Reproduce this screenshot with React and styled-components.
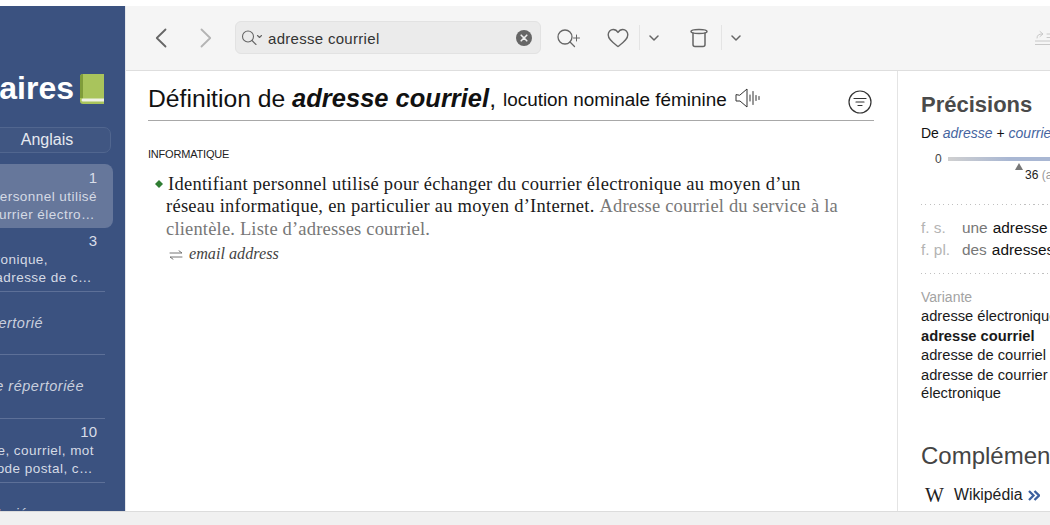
import React from 'react';
import styled, { createGlobalStyle } from 'styled-components';

const GlobalStyle = createGlobalStyle`
  html, body {
    margin: 0;
    padding: 0;
    width: 1050px;
    height: 525px;
    overflow: hidden;
    background: #fff;
    font-family: "Liberation Sans", Arial, sans-serif;
  }
`;

const Page = styled.div`
  display: flex;
  flex-direction: column;
  width: 1050px;
  height: 525px;
  box-sizing: border-box;
  background: #f0f0f0;
`;

const TopStrip = styled.div`
  flex: 0 0 6px;
  background: #fff;
`;

const Window = styled.div`
  display: flex;
  flex: 0 0 506px;
  background: #fff;
  border-bottom: 1px solid #dcdcdc;
  box-sizing: border-box;
  overflow: hidden;
`;

const Sidebar = styled.aside`
  display: flex;
  flex-direction: column;
  align-items: flex-end;
  flex: 0 0 125px;
  width: 125px;
  background: #3b5280;
  color: #fff;
  overflow: hidden;
  border-right: 1px solid #e4e6ea;
  box-sizing: content-box;
`;

const Brand = styled.div`
  display: flex;
  align-items: center;
  justify-content: flex-end;
  gap: 6px;
  flex: 0 0 30px;
  margin-top: 64px;
  padding-right: 21px;
  white-space: nowrap;
`;

const BrandTitle = styled.span`
  font-size: 32px;
  font-weight: 700;
  color: #fff;
`;

const Segment = styled.div`
  display: flex;
  align-items: center;
  justify-content: center;
  flex: 0 0 26px;
  width: 128px;
  margin-top: 20px;
  margin-right: 14px;
  border: 1px solid #51668f;
  border-radius: 0 7px 7px 0;
  box-sizing: border-box;
  background: #405682;
  font-size: 16px;
  color: #e6e9f0;
`;

const ResultList = styled.div`
  display: flex;
  flex-direction: column;
  width: 300px;
  margin-top: 11px;
`;

const Result = styled.div`
  display: flex;
  flex-direction: column;
  align-items: flex-end;
  flex: 0 0 ${(p) => p.$height}px;
  height: ${(p) => p.$height}px;
  box-sizing: border-box;
  margin-right: ${(p) => (p.$selected ? 12 : 20)}px;
  padding-top: ${(p) => (p.$selected ? 5 : 4)}px;
  padding-right: ${(p) => (p.$selected ? 16 : 8)}px;
  background: ${(p) => (p.$selected ? '#66779b' : 'transparent')};
  border-radius: ${(p) => (p.$selected ? '0 8px 8px 0' : '0')};
  border-bottom: ${(p) => (p.$selected || p.$plain ? '0' : '1px solid #5d7098')};
`;

const ResultCount = styled.span`
  height: 19px;
  font-size: 15px;
  line-height: 18px;
  color: #d8dde8;
`;

const ResultLine = styled.span`
  height: 18px;
  margin-right: ${(p) => p.$inset || 0}px;
  font-size: 13.5px;
  line-height: 18px;
  letter-spacing: 0.45px;
  white-space: nowrap;
  color: #d5dae5;
`;

const EmptyLine = styled(ResultLine)`
  margin-top: 18px;
  font-size: 14.5px;
  letter-spacing: 0.5px;
  font-style: italic;
  color: #c9cfdd;
`;

const Content = styled.div`
  display: flex;
  flex-direction: column;
  flex: 1;
  min-width: 0;
`;

const Toolbar = styled.div`
  display: flex;
  align-items: center;
  flex: 0 0 65px;
  height: 65px;
  padding-left: 29px;
  padding-bottom: 1px;
  box-sizing: border-box;
  background: #f5f5f5;
  border-bottom: 1px solid #dedede;
`;

const ToolIcon = styled.svg`
  display: block;
  flex: none;
  margin-left: ${(p) => p.$ml || 0}px;
  fill: none;
  stroke: ${(p) => p.$color || '#666'};
  stroke-width: ${(p) => p.$sw || 1.5};
  stroke-linecap: round;
  stroke-linejoin: round;
`;

const SearchField = styled.div`
  display: flex;
  flex: none;
  align-items: center;
  width: 306px;
  height: 33px;
  margin-left: 23px;
  padding: 0 8px 0 5px;
  box-sizing: border-box;
  background: #ebebeb;
  border: 1px solid #e2e2e2;
  border-radius: 6px;
`;

const SearchText = styled.span`
  flex: 1;
  margin-left: 5px;
  padding-top: 1px;
  font-size: 15px;
  letter-spacing: 0.3px;
  color: #333;
`;

const Separator = styled.span`
  flex: none;
  width: 1px;
  height: 25px;
  margin-left: ${(p) => p.$ml}px;
  background: #e4e4e4;
`;

const Panes = styled.div`
  display: flex;
  flex: 1;
  min-height: 0;
`;

const Main = styled.main`
  flex: 0 0 772px;
  width: 772px;
  padding: 0 23px 0 22px;
  box-sizing: border-box;
  border-right: 1px solid #e4e4e4;
`;

const Heading = styled.div`
  display: flex;
  align-items: center;
  height: 50px;
  padding-top: 5px;
  box-sizing: border-box;
  border-bottom: 1px solid #a8a8a8;
  white-space: nowrap;
  color: #111;
`;

const HeadingTitle = styled.h1`
  margin: 0;
  font-size: 24.7px;
  font-weight: 400;
  b {
    font-size: 25.5px;
    font-weight: 700;
    font-style: italic;
  }
`;

const HeadingKind = styled.span`
  margin-left: 7px;
  margin-top: 3px;
  font-size: 18.9px;
`;

const FilterButton = styled.svg`
  margin-left: auto;
  margin-top: 7px;
  margin-right: 2px;
  fill: none;
  stroke: #333;
  stroke-width: 1.2;
  stroke-linecap: round;
`;

const Domain = styled.div`
  margin-top: 27px;
  font-size: 11px;
  line-height: 13px;
  letter-spacing: -0.2px;
  color: #222;
`;

const Definition = styled.p`
  width: 676px;
  margin: 12px 0 0;
  padding-left: 18px;
  font-family: "Liberation Serif", "Times New Roman", serif;
  font-size: 18.5px;
  line-height: 22.4px;
  letter-spacing: 0.26px;
  text-indent: 2px;
  color: #1a1a1a;
`;

const Bullet = styled.svg`
  margin: 0 5px 2px -13px;
  fill: #2f7d32;
`;

const Example = styled.span`
  letter-spacing: 0.18px;
  color: #777;
`;

const Translation = styled.div`
  display: flex;
  align-items: center;
  gap: 6px;
  margin: 5px 0 0 21px;
  font-family: "Liberation Serif", "Times New Roman", serif;
  font-size: 16.2px;
  font-style: italic;
  color: #444;
`;

const Side = styled.aside`
  flex: 1;
  min-width: 0;
  overflow: hidden;
  padding: 21px 0 0 23px;
  box-sizing: border-box;
  white-space: nowrap;
`;

const SideTitle = styled.h2`
  margin: 0;
  font-size: 22px;
  line-height: 26px;
  font-weight: 700;
  color: #4a4a4a;
`;

const Origin = styled.div`
  margin-top: 6px;
  font-size: 14px;
  line-height: 18px;
  color: #111;
  i {
    color: #46659f;
  }
`;

const Timeline = styled.div`
  display: flex;
  align-items: center;
  margin: 10px 0 0 14px;
  font-size: 12px;
  line-height: 14px;
  color: #444;
`;

const Track = styled.div`
  width: 200px;
  height: 4px;
  margin-left: 6px;
  background: linear-gradient(90deg, #d0d0d0, #a9b7d3 60%);
`;

const Marker = styled.div`
  display: flex;
  margin: -4px 0 0 94px;
  font-size: 12px;
  line-height: 14px;
  color: #222;
  span {
    margin-top: 6px;
    margin-left: 2px;
  }
  span em {
    font-style: normal;
    color: #999;
  }
`;

const Triangle = styled.i`
  width: 0;
  height: 0;
  margin-top: 1px;
  border-left: 4px solid transparent;
  border-right: 4px solid transparent;
  border-bottom: 7px solid #777;
`;

const DottedRule = styled.div`
  height: 1px;
  margin-top: ${(p) => p.$top}px;
  background: repeating-linear-gradient(90deg, #c0c0c0 0 1px, transparent 1px 4.5px);
`;

const FormList = styled.div`
  margin-top: 12px;
`;

const FormRow = styled.div`
  display: flex;
  height: 22px;
  align-items: center;
  font-size: 15.4px;
  color: #111;
`;

const FormLabel = styled.span`
  flex: 0 0 41px;
  color: #b4b4b4;
`;

const FormArticle = styled.span`
  margin-right: 5px;
  color: #777;
`;

const VariantLabel = styled.div`
  margin-top: 14px;
  font-size: 14px;
  line-height: 18px;
  color: #a3a3a3;
`;

const VariantList = styled.div`
  margin-top: 1px;
  font-size: 14.7px;
  line-height: 19.6px;
  color: #1a1a1a;
`;

const VariantWrap = styled.div`
  width: 135px;
  line-height: 18px;
  white-space: normal;
`;

const SideTitleLight = styled.h2`
  margin: 40px 0 0;
  font-size: 24px;
  line-height: 28px;
  font-weight: 400;
  color: #444;
`;

const LinkRow = styled.div`
  display: flex;
  align-items: center;
  margin-top: 16px;
  font-size: 15.8px;
  line-height: 18px;
  color: #222;
`;

const WikiMark = styled.span`
  flex: 0 0 33px;
  padding-left: 4px;
  box-sizing: border-box;
  font-family: "Liberation Serif", "Times New Roman", serif;
  font-size: 20px;
  color: #222;
`;

const More = styled.svg`
  margin-left: 6px;
  margin-top: 2px;
  fill: none;
  stroke: #3c5f9e;
  stroke-width: 2.3;
`;

const Book = () => (
  <svg width="24" height="30" viewBox="0 0 24 30">
    <path d="M3 0h21v30H3a3 3 0 0 1-3-3V3a3 3 0 0 1 3-3z" fill="#a9c45c" />
    <path d="M3 0v24H0V3a3 3 0 0 1 3-3z" fill="#7f9c3a" />
    <path d="M3 24.5h21v3H3a1.5 1.5 0 0 1 0-3z" fill="#f0f2e6" />
  </svg>
);

const results = [
  { count: '1', lines: [['Identifiant personnel utilisé', 0], ['pour échanger du courrier électro…', 2]], selected: true, height: 64 },
  { count: '3', lines: [['Adresse électronique,', 49], ['courriel, adresse de c…', 5]], height: 64 },
  { empty: 'Non répertorié', inset: 54, height: 63 },
  { empty: 'Forme répertoriée', inset: 13, height: 64 },
  { count: '10', lines: [['Adresse, courriel, mot', 3], ['de passe, code postal, c…', 4]], height: 64 },
  { empty: 'Non répertoriée', inset: 61, height: 40, plain: true },
];

export default function App() {
  return (
    <Page>
      <GlobalStyle />
      <TopStrip />
      <Window>
        <Sidebar>
          <Brand>
            <BrandTitle>Dictionnaires</BrandTitle>
            <Book />
          </Brand>
          <Segment>Anglais</Segment>
          <ResultList>
            {results.map((r, i) => (
              <Result key={i} $height={r.height} $selected={r.selected} $plain={r.plain}>
                {r.count && <ResultCount>{r.count}</ResultCount>}
                {r.lines && r.lines.map(([t, inset]) => (
                  <ResultLine key={t} $inset={inset}>{t}</ResultLine>
                ))}
                {r.empty && <EmptyLine $inset={r.inset}>{r.empty}</EmptyLine>}
              </Result>
            ))}
          </ResultList>
        </Sidebar>

        <Content>
          <Toolbar>
            <ToolIcon width="12" height="20" viewBox="0 0 12 20" $sw={1.8}><path d="M10.500 1.500 1.800 10l8.700 8.500" /></ToolIcon>
            <ToolIcon width="12" height="20" viewBox="0 0 12 20" $ml={33} $sw={1.8} $color="#b4b4b4"><path d="M1.500 1.500 10.200 10l-8.700 8.500" /></ToolIcon>
            <SearchField>
              <ToolIcon width="22" height="18" viewBox="0 0 22 18" $sw={1.1}>
                <circle cx="7" cy="7.500" r="5.500" />
                <path d="m11 11.500 4 4" />
                <path d="m16.500 6.500 2 2 2-2" />
              </ToolIcon>
              <SearchText>adresse courriel</SearchText>
              <svg width="16" height="16" viewBox="0 0 16 16">
                <circle cx="8" cy="8" r="8" fill="#666" />
                <path d="m5.200 5.200 5.600 5.600m0-5.600-5.600 5.600" stroke="#ededed" strokeWidth="1.600" strokeLinecap="round" />
              </svg>
            </SearchField>
            <ToolIcon width="24" height="20" viewBox="0 0 24 20" $ml={16} $sw={1.3}>
              <circle cx="8" cy="9" r="7" />
              <path d="m13 14 4.500 4.500" />
              <path d="M19.500 7v6M16.500 10h6" strokeWidth="1" />
            </ToolIcon>
            <ToolIcon width="22" height="20" viewBox="0 0 22 20" $ml={26} $sw={1.4}>
              <path d="M11 18.500C6 14.500 1.200 11.500 1.200 6.700 1.200 3.700 3.500 1.500 6.200 1.500c2 0 3.700 1 4.800 3 1.100-2 2.800-3 4.800-3 2.700 0 5 2.200 5 5.200 0 4.800-4.800 7.800-9.800 11.800z" />
            </ToolIcon>
            <Separator $ml={10} />
            <ToolIcon width="10" height="6" viewBox="0 0 10 6" $ml={9} $sw={1.5}><path d="m1 1 4 4 4-4" /></ToolIcon>
            <ToolIcon width="18" height="20" viewBox="0 0 18 20" $ml={31} $sw={1.5}>
              <path d="M1 3.500c0-1.200 3-2 8-2s8 .8 8 2-3 2-8 2-8-.8-8-2z" />
              <path d="M3 5v11.500a2 2 0 0 0 2 2h8a2 2 0 0 0 2-2V5" />
            </ToolIcon>
            <Separator $ml={13} />
            <ToolIcon width="10" height="6" viewBox="0 0 10 6" $ml={9} $sw={1.5}><path d="m1 1 4 4 4-4" /></ToolIcon>
            <ToolIcon width="20" height="16" viewBox="0 0 20 16" $ml={294} $sw={1} $color="#c8c8c8">
              <path d="M2 8c0-3 2-4 5-4M5 1.500 8 4 5 6.500" />
              <path d="M0 11h20M0 14.500h20M12 4h8M12 7.500h8" />
            </ToolIcon>
          </Toolbar>

          <Panes>
            <Main>
              <Heading>
                <HeadingTitle>Définition de <b>adresse courriel</b>,</HeadingTitle>
                <HeadingKind>locution nominale féminine</HeadingKind>
                <ToolIcon width="26" height="20" viewBox="0 0 26 20" $ml={8} $color="#333" $sw={1}>
                  <path d="M1 7v6h4l7 6V1L5 7z" />
                  <path d="M15 7v6M18 3.500v13M21 7.500v5M24 8.500v3" />
                </ToolIcon>
                <FilterButton width="24" height="24" viewBox="0 0 24 24">
                  <circle cx="12" cy="12" r="11" />
                  <path d="M6 8.500h12M8 12h8M10 15.500h4" />
                </FilterButton>
              </Heading>
              <Domain>INFORMATIQUE</Domain>
              <Definition>
                <Bullet width="8" height="8" viewBox="0 0 8 8"><path d="M4 0l4 4-4 4-4-4z" /></Bullet>
                Identifiant personnel utilisé pour échanger du courrier électronique au moyen d’un réseau informatique, en particulier au moyen d’Internet. <Example>Adresse courriel du service à la clientèle. Liste d’adresses courriel.</Example>
              </Definition>
              <Translation>
                <ToolIcon width="14" height="10" viewBox="0 0 14 10" $sw={0.9} $color="#666">
                  <path d="M1 3h12L10 .8M13 7H1l3 2.200" />
                </ToolIcon>
                <span>email address</span>
              </Translation>
            </Main>

            <Side>
              <SideTitle>Précisions</SideTitle>
              <Origin>De <i>adresse</i> + <i>courriel</i></Origin>
              <Timeline>0<Track /></Timeline>
              <Marker><Triangle /><span>36 <em>(adresse)</em></span></Marker>
              <DottedRule $top={22} />
              <FormList>
                <FormRow><FormLabel>f. s.</FormLabel><FormArticle>une</FormArticle>adresse courriel</FormRow>
                <FormRow><FormLabel>f. pl.</FormLabel><FormArticle>des</FormArticle>adresses courriels</FormRow>
              </FormList>
              <DottedRule $top={12} />
              <VariantLabel>Variante</VariantLabel>
              <VariantList>
                <div>adresse électronique</div>
                <div><b>adresse courriel</b></div>
                <div>adresse de courriel</div>
                <VariantWrap>adresse de courrier électronique</VariantWrap>
              </VariantList>
              <SideTitleLight>Compléments</SideTitleLight>
              <LinkRow>
                <WikiMark>W</WikiMark>Wikipédia
                <More width="12" height="11" viewBox="0 0 12 11"><path d="M1 1l4.500 4.500L1 10M6.500 1 11 5.500 6.500 10" /></More>
              </LinkRow>
            </Side>
          </Panes>
        </Content>
      </Window>
    </Page>
  );
}
